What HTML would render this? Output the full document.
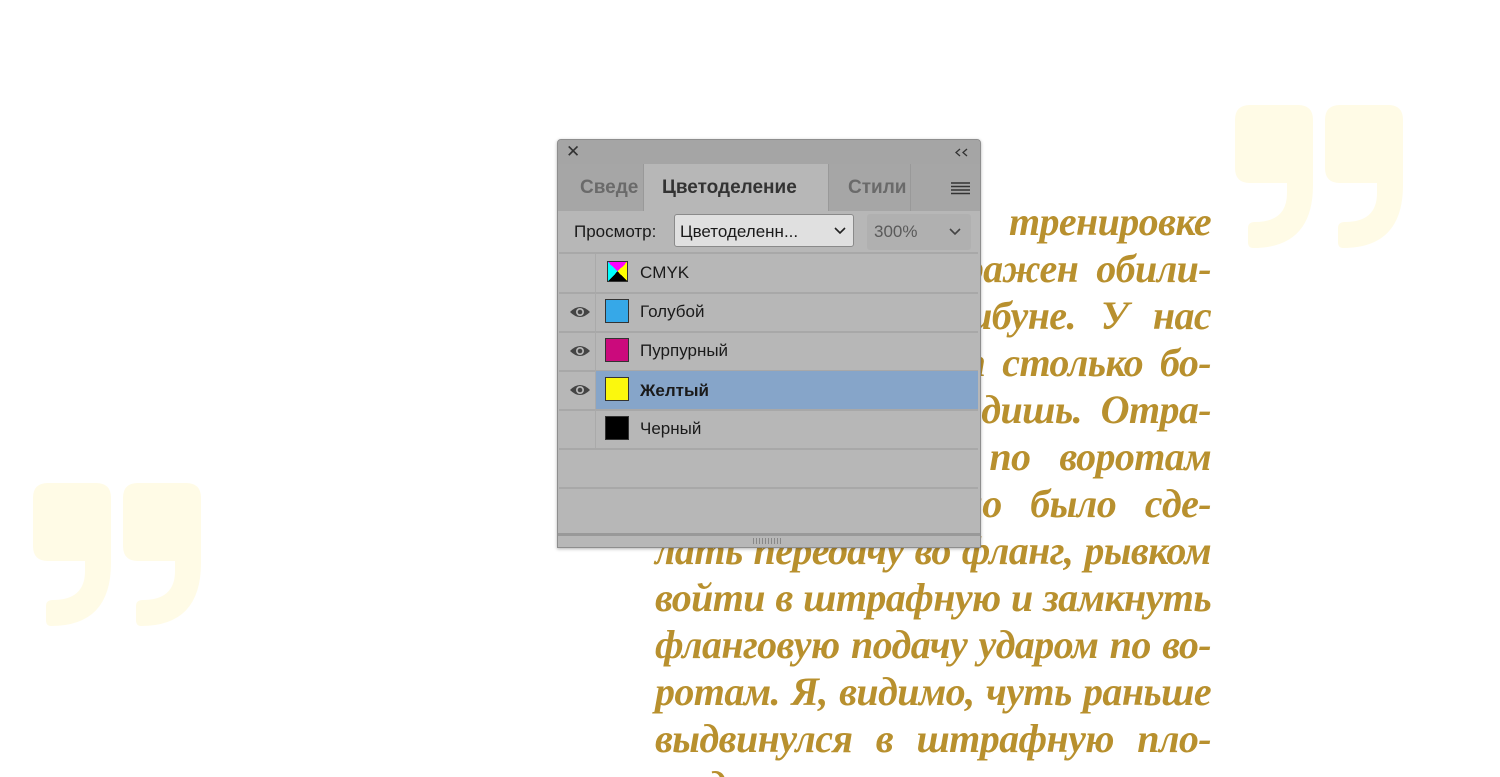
<!DOCTYPE html>
<html><head><meta charset="utf-8"><style>
html,body{margin:0;padding:0;width:1500px;height:777px;overflow:hidden;background:#fff;position:relative}
.q{position:absolute}
.txt{position:absolute;left:655px;top:198px;width:556px;font-family:"Liberation Serif",serif;font-style:italic;font-weight:bold;font-size:40px;line-height:47px;color:#b8902e;letter-spacing:-0.6px;word-spacing:-2px}
.txt div{text-align:justify;text-align-last:justify;white-space:nowrap;height:47px}
.p{position:absolute;left:557px;top:139px;width:424px;height:409px;background:#b7b7b7;border:1px solid #8e8e8e;box-sizing:border-box;border-radius:4px 4px 0 0;font-family:"Liberation Sans",sans-serif;color:#1a1a1a;box-shadow:0 1px 3px rgba(0,0,0,.3);overflow:hidden}
.abs{position:absolute}
.row{position:absolute;left:1px;width:419px;height:38px;border-bottom:2px solid #a8a8a8;font-size:17px}
.row .c{position:absolute;left:36px;top:0;width:1px;height:38px;background:#aaa}
.sw{position:absolute;left:46px;top:6px;width:22px;height:22px;border:1px solid #333}
.lb{position:absolute;left:81px;top:9px}
.eye{position:absolute;left:10px;top:12px}
</style></head><body>
<svg class="q" style="left:1235px;top:105px" width="170" height="145" viewBox="0 0 170 145"><g fill="#fffbe6"><path id="g" d="M15,0 H63 Q78,0 78,15 V80 Q78,143 18,143 Q13,143 13,137 V123 Q13,117 20,117 Q52,117 52,88 V78 H15 Q0,78 0,63 V15 Q0,0 15,0 Z"/><use href="#g" x="90"/></g></svg>
<svg class="q" style="left:33px;top:483px" width="170" height="145" viewBox="0 0 170 145"><g fill="#fffbe6"><path id="g2" d="M15,0 H63 Q78,0 78,15 V80 Q78,143 18,143 Q13,143 13,137 V123 Q13,117 20,117 Q52,117 52,88 V78 H15 Q0,78 0,63 V15 Q0,0 15,0 Z"/><use href="#g2" x="90"/></g></svg>
<div class="txt">
<div>На последней тренировке</div>
<div>я был просто поражен обили-</div>
<div>ем людей на трибуне. У нас</div>
<div>обычно не бывает столько бо-</div>
<div>лельщиков, ты видишь. Отра-</div>
<div>батывали удары по воротам</div>
<div>и, как необходимо было сде-</div>
<div>лать передачу во фланг, рывком</div>
<div>войти в штрафную и замкнуть</div>
<div>фланговую подачу ударом по во-</div>
<div>ротам. Я, видимо, чуть раньше</div>
<div>выдвинулся в штрафную пло-</div>
<div>щадь и мяч пролетел мимо</div>
</div>
<div class="p">
 <div class="abs" style="left:0;top:0;width:424px;height:24px;background:#a5a5a5"></div>
 <div class="abs" style="left:8px;top:2px;font-size:17px;color:#333">✕</div>
 <svg class="abs" style="left:397px;top:8px" width="14" height="9"><path d="M5,1 L1,4.5 L5,8 M12,1 L8,4.5 L12,8" fill="none" stroke="#333" stroke-width="1.3"/></svg>
 <div class="abs" style="left:0;top:24px;width:424px;height:47px;background:#a6a6a6"></div>
 <div class="abs" style="left:85px;top:24px;width:184px;height:47px;background:#b7b7b7;border-left:1px solid #999;border-right:1px solid #999"></div>
 <div class="abs" style="left:352px;top:24px;width:1px;height:47px;background:#999"></div>
 <div class="abs" style="left:22px;top:37px;font-size:19px;font-weight:bold;color:#6a6a6a;width:62px;overflow:hidden;white-space:nowrap">Сведе</div>
 <div class="abs" style="left:104px;top:37px;font-size:19px;font-weight:bold;color:#333">Цветоделение</div>
 <div class="abs" style="left:290px;top:37px;font-size:19px;font-weight:bold;color:#6a6a6a">Стили</div>
 <svg class="abs" style="left:393px;top:42px" width="19" height="13"><g stroke="#333" stroke-width="1.4"><line x1="0" y1="1" x2="19" y2="1"/><line x1="0" y1="4.5" x2="19" y2="4.5"/><line x1="0" y1="8" x2="19" y2="8"/><line x1="0" y1="11.5" x2="19" y2="11.5"/></g></svg>
 <div class="abs" style="left:16px;top:82px;font-size:17px">Просмотр:</div>
 <div class="abs" style="left:116px;top:74px;width:180px;height:33px;background:#e0e0e0;border:1px solid #8a8a8a;border-radius:3px;box-sizing:border-box"></div>
 <div class="abs" style="left:122px;top:82px;font-size:17px">Цветоделенн...</div>
 <svg class="abs" style="left:276px;top:87px" width="12" height="8"><path d="M1,1 L6,6 L11,1" fill="none" stroke="#222" stroke-width="1.6"/></svg>
 <div class="abs" style="left:309px;top:74px;width:104px;height:36px;background:#b0b0b0;border-radius:3px"></div>
 <div class="abs" style="left:316px;top:82px;font-size:17px;color:#5a5a5a">300%</div>
 <svg class="abs" style="left:391px;top:88px" width="12" height="8"><path d="M1,1 L6,6 L11,1" fill="none" stroke="#444" stroke-width="1.6"/></svg>
 <div class="abs" style="left:1px;top:112px;width:419px;height:2px;background:#a8a8a8"></div>
 <div class="row" style="top:114px"><div class="c"></div><div class="sw" style="top:7px;width:19px;height:19px;left:48px;background:conic-gradient(from -45deg,#f0f 0 25%,#ff0 0 50%,#000 0 75%,#0ff 0)"></div><div class="lb">CMYK</div></div>
 <div class="row" style="top:153px"><svg class="eye" width="22" height="14"><path d="M1,7 Q11,-3 21,7 Q11,17 1,7Z" fill="#444"/><circle cx="11" cy="7" r="4" fill="#b7b7b7"/><circle cx="11" cy="7" r="2.3" fill="#444"/></svg><div class="c"></div><div class="sw" style="background:#36a8e8"></div><div class="lb">Голубой</div></div>
 <div class="row" style="top:192px"><svg class="eye" width="22" height="14"><path d="M1,7 Q11,-3 21,7 Q11,17 1,7Z" fill="#444"/><circle cx="11" cy="7" r="4" fill="#b7b7b7"/><circle cx="11" cy="7" r="2.3" fill="#444"/></svg><div class="c"></div><div class="sw" style="background:#cb0a7c"></div><div class="lb">Пурпурный</div></div>
 <div class="row" style="top:231px"><div class="abs" style="left:37px;top:0;width:382px;height:38px;background:#86a5c9"></div><svg class="eye" width="22" height="14"><path d="M1,7 Q11,-3 21,7 Q11,17 1,7Z" fill="#444"/><circle cx="11" cy="7" r="4" fill="#b7b7b7"/><circle cx="11" cy="7" r="2.3" fill="#444"/></svg><div class="c"></div><div class="sw" style="background:#fbf80d"></div><div class="lb" style="font-weight:bold;top:10px">Желтый</div></div>
 <div class="row" style="top:270px"><div class="c"></div><div class="sw" style="background:#000"></div><div class="lb">Черный</div></div>
 <div class="row" style="top:309px;height:38px"></div>
 <div class="abs" style="left:0;top:393px;width:424px;height:3px;background:#999"></div>
 <div class="abs" style="left:195px;top:398px;width:30px;height:6px;background:repeating-linear-gradient(90deg,#888 0 1px,transparent 1px 3px)"></div>
</div>
</body></html>
